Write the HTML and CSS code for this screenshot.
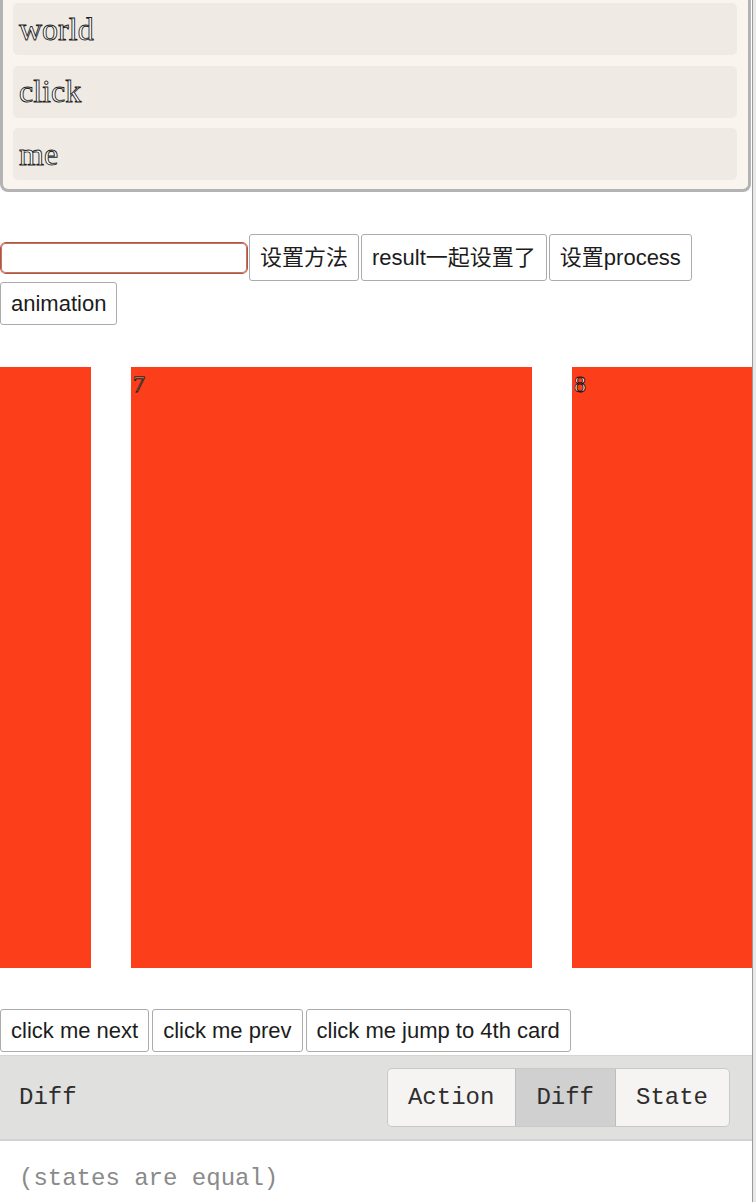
FILE: index.html
```html
<!DOCTYPE html>
<html lang="zh">
<head>
<meta charset="utf-8">
<title>Carousel demo</title>
<link rel="stylesheet" href="styles.css">
</head>
<body>
<div class="page">
  <div class="list-panel">
    <div class="list-item">world</div>
    <div class="list-item">click</div>
    <div class="list-item">me</div>
  </div>

  <div class="controls">
    <input class="field" type="text">
    <button class="btn btn--cjk">设置方法</button>
    <button class="btn btn--cjk">result一起设置了</button>
    <button class="btn btn--cjk">设置process</button>
    <button class="btn">animation</button>
  </div>

  <div class="carousel">
    <div class="track">
      <div class="card"></div>
      <div class="card">7</div>
      <div class="card">8</div>
    </div>
  </div>

  <div class="nav">
    <button class="btn btn--nav">click me next</button>
    <button class="btn btn--nav">click me prev</button>
    <button class="btn btn--nav">click me jump to 4th card</button>
  </div>

  <div class="devtools">
    <div class="dt-header">
      <span class="dt-title">Diff</span>
      <div class="tabs">
        <span class="tab">Action</span>
        <span class="tab tab--active">Diff</span>
        <span class="tab">State</span>
      </div>
    </div>
    <div class="dt-body">(states are equal)</div>
  </div>
</div>
<div class="edge"></div>
</body>
</html>
```

FILE: styles.css
```css
html, body {
  margin: 0;
  padding: 0;
  background: #fff;
}

body {
  display: flex;
  min-height: 1202px;
  overflow: hidden;
}

.page {
  width: 752px;
  flex: none;
  overflow: hidden;
}

.edge {
  flex: 1;
  border-left: 1px solid #9a9a9a;
  background: #e8e8e8;
}

/* top list panel */
.list-panel {
  background: #faf4ef;
  border: 3px solid #b3b3b3;
  border-top: none;
  border-radius: 0 0 8px 8px;
  padding: 3px 11px 9px 10px;
  box-sizing: border-box;
  width: 751px;
  display: flex;
  flex-direction: column;
  gap: 10.5px;
}

.list-item {
  height: 52px;
  background: #efebe4;
  border-radius: 5px;
  padding-left: 6px;
  display: flex;
  align-items: center;
  font-family: "Liberation Serif", "DejaVu Serif", serif;
  font-size: 32px;
  color: #fff;
  -webkit-text-stroke: 0.9px #1e1e1e;
}

/* controls */
.controls {
  margin-top: 42px;
  display: flex;
  flex-wrap: wrap;
  align-items: center;
  column-gap: 2px;
  row-gap: 1px;
}

.field {
  width: 248px;
  height: 32px;
  box-sizing: border-box;
  margin: 0 -1px 0 0;
  padding: 0 6px;
  border: 1px solid #e8401c;
  border-radius: 6px;
  box-shadow: inset 0 0 0 1px #8a8a8a;
  background: #fff;
  outline: none;
}

.btn {
  height: 43px;
  box-sizing: border-box;
  margin: 0;
  padding: 0 10px;
  border: 1px solid #ababab;
  border-radius: 3px;
  background: #fff;
  font-family: "Liberation Sans", "Noto Sans CJK SC", sans-serif;
  font-size: 22px;
  line-height: 25px;
  color: #1c1c1c;
  display: inline-flex;
  align-items: center;
  white-space: nowrap;
}

.btn--cjk {
  height: 47px;
}

.btn--nav {
  height: 42.5px;
}

/* carousel */
.carousel {
  margin-top: 42px;
  overflow: hidden;
}

.track {
  display: flex;
  gap: 40px;
  margin-left: -310px;
}

.card {
  flex: none;
  width: 401px;
  height: 601px;
  box-sizing: border-box;
  padding: 4px 2px;
  background: #fc3e1a;
  font-family: "Liberation Serif", "DejaVu Serif", serif;
  font-size: 24px;
  color: #fff;
  -webkit-text-stroke: 0.9px #2a0a05;
}

/* nav buttons */
.nav {
  margin-top: 41px;
  display: flex;
  gap: 3px;
}

/* devtools */
.devtools {
  margin-top: 3.5px;
  font-family: "Liberation Mono", "DejaVu Sans Mono", monospace;
  font-size: 24px;
}

.dt-header {
  height: 83px;
  border-top: 1px solid #d8d5cf;
  border-bottom: 2px solid #d2d2d2;
  background: #e0e0df;
  display: flex;
  align-items: center;
  justify-content: space-between;
  padding: 0 22px 0 19px;
}

.dt-title {
  color: #2e2e2e;
}

.tabs {
  display: flex;
  height: 59px;
  box-sizing: border-box;
  border: 1px solid #c9c9c9;
  border-radius: 5px;
  background: #f5f4f2;
  overflow: hidden;
}

.tab {
  display: flex;
  align-items: center;
  padding: 0 21px 0 20px;
  color: #2e2e2e;
}

.tab--active {
  background: #d0d0d0;
  border-left: 1px solid #bdbdbd;
  border-right: 1px solid #bdbdbd;
}

.dt-body {
  padding: 24px 19px 20px;
  color: #8a8a8a;
}
```
